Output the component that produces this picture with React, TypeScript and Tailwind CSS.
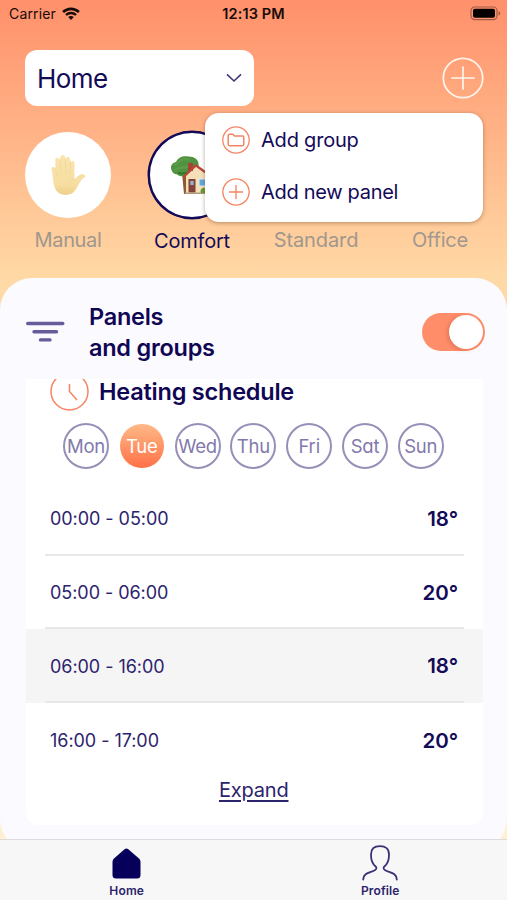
import React from "react";

const modes = [
  { label: "Manual", icon: "hand", tone: "text-[#a0978f] tracking-[-0.35px]" },
  { label: "Comfort", icon: "house", tone: "text-[#130a58] tracking-[-0.2px] relative top-px" },
  { label: "Standard", icon: "", tone: "text-[#a0978f] tracking-[-0.1px]" },
  { label: "Office", icon: "", tone: "text-[#a0978f] tracking-[-0.2px]" },
];

const days = ["Mon", "Tue", "Wed", "Thu", "Fri", "Sat", "Sun"];

const slots = [
  { time: "00:00 - 05:00", temp: "18°" },
  { time: "05:00 - 06:00", temp: "20°" },
  { time: "06:00 - 16:00", temp: "18°", active: true },
  { time: "16:00 - 17:00", temp: "20°" },
];

function Wifi() {
  return (
    <svg width="18" height="14" viewBox="0 0 20 15" fill="none" stroke="#170b08">
      <path d="M1.2 5.3C6.2 .6 13.8 .6 18.8 5.3" strokeWidth="2.9" />
      <path d="M4.4 8.6C7.5 5.6 12.5 5.6 15.6 8.6" strokeWidth="2.6" />
      <path d="M6.9 10.9C8.7 9.2 11.3 9.2 13.1 10.9L10 14.2Z" fill="#170b08" stroke="none" />
    </svg>
  );
}

function Battery() {
  return (
    <svg width="31" height="15" viewBox="0 0 31 15">
      <rect x="1" y="1" width="26" height="12.6" rx="3.6" fill="none" stroke="#a65a45" strokeWidth="1.2" />
      <rect x="3" y="2.8" width="22" height="9" rx="1.8" fill="#050000" />
      <path d="M28.5 5V9.6C30.8 8.6 30.8 6 28.5 5Z" fill="#a65a45" />
    </svg>
  );
}

function Hand() {
  return (
    <svg width="38" height="44" viewBox="0 0 38 44">
      <defs>
        <linearGradient id="skin" x1="0" y1="0" x2="0" y2="1">
          <stop offset="0" stopColor="#f9e5ae" />
          <stop offset=".75" stopColor="#f7dda0" />
          <stop offset="1" stopColor="#edcf88" />
        </linearGradient>
      </defs>
      <path
        d="M6 35C3.8 30 4 22 2.6 17C1.8 13.6 5.4 13 6.4 15.6L6.3 7.2C6.2 4.2 10 4 10.5 7L11.4 4C11.7 1.2 15.8 1.2 16 4.2L16.6 6C17.1 3 20.8 3.2 20.9 6.2L22.2 9C23 6.9 25.6 7.8 25.5 10.4L25.4 26C27.2 25.6 28.5 22.6 31 21.8C33.6 20.4 37.4 22.2 36.4 23.8C33 25.4 31.2 28.8 29.2 32.2C25.4 39.4 22.7 41.8 16.5 41.8C11 41.8 7.6 39.2 6 35Z"
        fill="url(#skin)"
      />
      <path
        d="M6.6 16L8 22M11.1 7L12 20.5M16.3 6L16.7 20.5M21.2 9L20.9 21.5M25.4 26C22 27 20 29.5 19.5 32.5M7 36C10.5 41.5 20 42.5 24 38.5"
        fill="none"
        stroke="#efd596"
        strokeWidth=".7"
        strokeLinecap="round"
      />
    </svg>
  );
}

function House() {
  return (
    <svg width="44" height="44" viewBox="0 0 44 44" className="shrink-0">
      <path d="M12 20L14 41H19L18 20Z" fill="#8a5b35" />
      <path d="M2 18C-.5 14 2 9.5 6 9C8 4 14 2.2 18.5 3.6C24 3.4 29 7 28.5 11.5C30 17 25.5 21.5 20 21C15 24.2 9 23.8 7 21.2C4.5 21.4 2.8 20 2 18Z" fill="#4f9240" />
      <path d="M5.5 12C9 6.5 15 5.5 19 7M5 17C10 13 15 16 19 13" fill="none" stroke="#5c9b47" strokeWidth="2.5" strokeLinecap="round" />
      <path d="M8 20C13 21 20 20 23 17" fill="none" stroke="#35712f" strokeWidth="2" />
      <path d="M16 22L26 13L40 22V40H16Z" fill="#f5dfb8" />
      <rect x="18" y="10" width="5" height="8" fill="#a44434" />
      <path d="M13.5 24L26 12.5L42 24" fill="none" stroke="#b94639" strokeWidth="2.2" />
      <rect x="18.5" y="26" width="7" height="13.5" fill="#824535" />
      <rect x="20.3" y="28" width="3.4" height="4" fill="#8fb5d2" />
      <rect x="29" y="26" width="8" height="7" fill="#67a8d7" stroke="#e7ecee" />
      <path d="M15 39.5H40V41H15Z" fill="#b29c80" />
      <path d="M31 40C29 36 34 33 37 36L41 40Z" fill="#689b35" />
    </svg>
  );
}

function CirclePlus({ size, color, width, arm }: { size: number; color: string; width: number; arm: number }) {
  return (
    <svg width={size} height={size} viewBox="0 0 42 42" fill="none" stroke={color} strokeWidth={width}>
      <circle cx="21" cy="21" r="19.7" />
      <path d={`M${21 - arm} 21H${21 + arm}M21 ${21 - arm}V${21 + arm}`} strokeLinecap="round" />
    </svg>
  );
}

function FolderBadge() {
  return (
    <svg width="28" height="28" viewBox="0 0 28 28" fill="none" stroke="#f58465">
      <circle cx="14" cy="14" r="13.2" strokeWidth="1.3" />
      <path d="M6.2 9.4Q6.2 8.2 7.4 8.2H10.8L12.4 10H20.4Q21.8 10 21.8 11.4V18.2Q21.8 19.8 20.2 19.8H7.8Q6.2 19.8 6.2 18.2Z" strokeWidth="1.5" strokeLinejoin="round" />
    </svg>
  );
}

export default function App() {
  return (
    <div className="relative flex h-[900px] w-[507px] flex-col overflow-hidden bg-[linear-gradient(180deg,#ff906b_0px,#ffd9a5_278px,#fff0d2_840px)] font-['Inter','Liberation_Sans',sans-serif] text-[#130a58]">
      <header className="grid h-[50px] shrink-0 grid-cols-3 items-start pt-[6px] text-[#170b08]">
        <div className="flex items-center gap-[6px] pl-[9px]">
          <span className="text-[14px] leading-4 tracking-[0.15px]">Carrier</span>
          <Wifi />
        </div>
        <span className="text-center text-[14.5px] leading-4 font-semibold tracking-[0.1px]">12:13 PM</span>
        <div className="flex justify-end pr-[6px]"><Battery /></div>
      </header>

      <div className="flex h-14 shrink-0 items-center justify-between pr-[23.5px] pl-[25px]">
        <button className="flex h-14 w-[229px] items-center justify-between rounded-[12px] bg-white pr-[12px] pl-[12px]">
          <span className="mt-[2px] text-[26px] leading-8 tracking-[-0.6px]">Home</span>
          <svg width="16" height="10" viewBox="0 0 16 10" fill="none" stroke="#423777" strokeWidth="1.6"><path d="M1 1.3L8 8L15 1.3" /></svg>
        </button>
        <CirclePlus size={42} color="#fff5ed" width={1.7} arm={11} />
      </div>

      <div className="flex h-[172px] shrink-0 gap-[38px] pt-[25px] pl-[25px]">
        {modes.map((mode) => (
          <div key={mode.label} className="flex w-[86px] flex-col items-center">
            <div className={mode.icon === "house" ? "flex size-[88px] shrink-0 items-center justify-center rounded-full border-[2px] border-[#130a58] bg-white ring-[0.5px] ring-[#130a58]" : "my-px flex size-[86px] shrink-0 items-center justify-center rounded-full bg-white"}>
              {mode.icon === "hand" && <Hand />}
              {mode.icon === "house" && <House />}
            </div>
            <span className={`mt-[9px] text-[20px] leading-6 whitespace-nowrap ${mode.tone}`}>{mode.label}</span>
          </div>
        ))}
      </div>

      <main className="flex h-[573px] shrink-0 flex-col rounded-[32px] bg-[#fbfaff]">
        <div className="flex h-[101px] items-start pt-[23px] pr-[22px] pl-[26px]">
          <svg className="mt-[20px]" width="39" height="21" viewBox="0 0 39 21" stroke="#665b9b" strokeWidth="3.4" strokeLinecap="round">
            <path d="M1.7 2.5H36.8M8 10.7H30.5M14.5 18.9H24" />
          </svg>
          <h1 className="ml-[24px] text-[23.5px] leading-[31px] font-semibold tracking-[-0.25px] text-[#100653]">Panels<br />and groups</h1>
          <button className="mt-[12px] ml-auto flex h-[38px] w-[63px] items-center justify-end rounded-full bg-[#ff8d6a] p-[2.5px]">
            <span className="size-[34px] rounded-full bg-white shadow-[-2px_1px_4px_rgba(120,30,0,0.2)]" />
          </button>
        </div>

        <section className="ml-[26px] flex h-[446px] w-[457px] flex-col rounded-b-[12px] bg-white">
          <div className="flex h-[32px] pl-[24px]">
            <div className="flex h-[32px] w-[39px] shrink-0 items-end overflow-hidden">
              <svg width="39" height="39" viewBox="0 0 39 39" fill="none" stroke="#f58465" strokeWidth="1.5" className="shrink-0">
                <circle cx="19.5" cy="19.5" r="18.5" />
                <path d="M19.5 12.5V19.5L26.5 27.5" strokeLinecap="round" />
              </svg>
            </div>
            <h2 className="ml-[10px] h-[32px] text-[23.5px] leading-[26px] font-semibold tracking-[-0.22px] text-[#100653]">Heating schedule</h2>
          </div>
          <div className="mt-[12px] ml-[37px] flex gap-[9.8px]">
            {days.map((day) => (
              <div key={day} className={day === "Tue" ? "flex size-[46px] items-center justify-center rounded-full border border-white bg-linear-to-b from-[#ffb886] to-[#ff7046] text-white" : "flex size-[46px] items-center justify-center rounded-full border-2 border-[#9690b8] text-[#8179ac]"}>
                <span className="mt-px text-[18.5px] tracking-[-0.2px] [font-feature-settings:'cv11']">{day}</span>
              </div>
            ))}
          </div>
          <div className="mt-[13px]">
            {slots.map((slot) => (
              <div key={slot.time} className={slot.active ? "h-[73.7px] bg-[#f5f5f6] px-[19px]" : "h-[73.7px] px-[19px]"}>
                <div className={slot.time.startsWith("16") ? "flex h-full items-center justify-between pr-[6px] pl-[5px]" : "flex h-full items-center justify-between border-b-2 border-[#e8e8e8] pr-[6px] pl-[5px]"}>
                  <span className="mt-[2px] text-[18px] tracking-[-0.05px] text-[#2c236d]">{slot.time}</span>
                  <span className="mt-[3px] text-[20.5px] font-semibold tracking-[-0.1px]">{slot.temp}</span>
                </div>
              </div>
            ))}
          </div>
          <a className="mr-auto ml-[193px] mt-px text-[20px] leading-6 tracking-[-0.2px] text-[#2c236d] underline decoration-[1.5px] underline-offset-[3px]">Expand</a>
        </section>
      </main>

      <nav className="absolute inset-x-0 bottom-0 flex h-[61px] border-t border-[#dcdcdc] bg-[#f7f7f7] text-[12px] font-semibold text-[#2c236d]">
        <div className="flex flex-1 flex-col items-center pt-[8px]">
          <svg width="29" height="31" viewBox="0 0 29 31" fill="#07005a"><path d="M12.8 1Q14.4-.2 16 1L27 10.6Q28.5 12 28.5 14V27Q28.5 30.5 25 30.5H4Q.5 30.5 .5 27V14Q.5 12 2 10.6Z" /></svg>
          <span className="mt-[4px] leading-4 tracking-[0.15px]">Home</span>
        </div>
        <div className="flex flex-1 flex-col items-center pt-[5px]">
          <svg width="36" height="36" viewBox="0 0 36 36" fill="none" stroke="#3a3076" strokeWidth="1.8" strokeLinecap="round">
            <path d="M1.2 34.5C1.2 27.5 9 27.6 12.8 25.2C16 23.2 14 21.8 12 19.8C9 16.5 9 12.5 9 9.5C9 4 12.5 1.2 18 1.2C23.5 1.2 27 4 27 9.5C27 12.5 27 16.5 24 19.8C22 21.8 20 23.2 23.2 25.2C27 27.6 34.8 27.5 34.8 34.5" />
          </svg>
          <span className="mt-[2px] leading-4 tracking-[0.15px]">Profile</span>
        </div>
      </nav>

      <div className="absolute top-[113px] left-[205px] flex h-[109px] w-[278px] flex-col gap-[24px] rounded-[14px] bg-white pt-[13px] pl-[17px] shadow-[0_1px_4px_rgba(80,45,20,0.4)]">
        <div className="flex items-center gap-[11px]">
          <FolderBadge />
          <span className="text-[20px] leading-7 tracking-[-0.2px]">Add group</span>
        </div>
        <div className="flex items-center gap-[11px]">
          <CirclePlus size={28} color="#f58465" width={2} arm={10} />
          <span className="text-[20px] leading-7 tracking-[-0.3px]">Add new panel</span>
        </div>
      </div>
    </div>
  );
}
